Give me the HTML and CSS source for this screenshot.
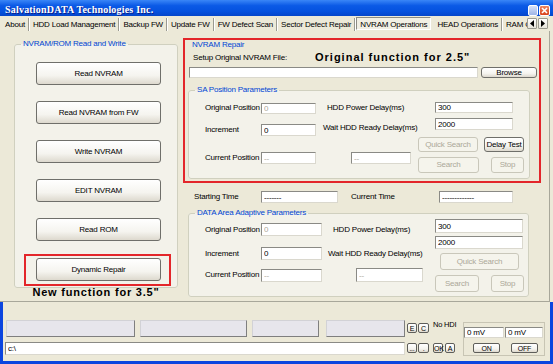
FILE: index.html
```html
<!DOCTYPE html>
<html lang="en">
<head>
    <meta charset="UTF-8">
    <meta name="viewport" content="width=device-width, initial-scale=1.0">
    <title>SalvationDATA Technologies Inc.</title>
    <link rel="stylesheet" href="styles.css">
</head>
<body>

<div class="window">

    <!-- title bar -->
    <div class="titlebar">
        <span class="title">SalvationDATA Technologies Inc.</span>
        <div class="title-buttons">
            <span class="tb tb-min"></span>
            <span class="tb tb-close">
                <svg width="11" height="11" viewBox="0 0 11 11"><path d="M3 3 L8 8 M8 3 L3 8" stroke="#fff" stroke-width="1.6"/></svg>
            </span>
        </div>
    </div>

    <!-- tab strip -->
    <div class="tabs">
        <div class="tab-strip">
            <span class="tab">About</span>
            <span class="tab">HDD Load Management</span>
            <span class="tab">Backup FW</span>
            <span class="tab">Update FW</span>
            <span class="tab">FW Defect Scan</span>
            <span class="tab">Sector Defect Repair</span>
            <span class="tab selected">NVRAM Operations</span>
            <span class="tab">HEAD Operations</span>
            <span class="tab">RAM Check</span>
        </div>
        <div class="tab-arrows">
            <span class="arrow"><svg width="4" height="7" viewBox="0 0 4 7"><polygon points="4,0 4,7 0,3.5" fill="#000"/></svg></span>
            <span class="arrow"><svg width="4" height="7" viewBox="0 0 4 7"><polygon points="0,0 0,7 4,3.5" fill="#000"/></svg></span>
        </div>
    </div>

    <!-- NVRAM Operations page -->
    <div class="page">
        <div class="col-left">
            <fieldset class="group group-rw">
                <legend>NVRAM/ROM Read and Write</legend>
                <div class="btn-stack">
                    <button class="btn btn-big">Read NVRAM</button>
                    <button class="btn btn-big">Read NVRAM from FW</button>
                    <button class="btn btn-big">Write NVRAM</button>
                    <button class="btn btn-big">EDIT NVRAM</button>
                    <button class="btn btn-big">Read ROM</button>
                    <div class="mark mark-new">
                        <button class="btn btn-big">Dynamic Repair</button>
                    </div>
                </div>
            </fieldset>
            <p class="note note-new">New function for 3.5"</p>
        </div>

        <div class="col-right">
            <div class="mark mark-repair">
                <div class="sub-title">NVRAM Repair</div>
                <div class="file-head">
                    <span class="file-label">Setup Original NVRAM File:</span>
                    <span class="note">Original function for 2.5"</span>
                </div>
                <div class="file-row">
                    <input class="field file-field" type="text" value="">
                    <button class="btn browse-btn">Browse</button>
                </div>

                <fieldset class="group sa">
                    <legend>SA Position Parameters</legend>
                    <div class="param-body">
                        <div class="param-left">
                            <div class="prow">
                                <span class="plabel">Original Position</span>
                                <input class="field fpos" type="text" value="0" disabled>
                                <span class="mlabel">HDD Power Delay(ms)</span>
                            </div>
                            <div class="prow">
                                <span class="plabel">Increment</span>
                                <input class="field fpos" type="text" value="0">
                                <span class="mlabel">Wait HDD Ready Delay(ms)</span>
                            </div>
                            <div class="prow">
                                <span class="plabel">Current Position</span>
                                <input class="field fpos" type="text" value="--" disabled>
                                <input class="field fcur" type="text" value="--" disabled>
                            </div>
                        </div>
                        <div class="param-right">
                            <input class="field fdelay" type="text" value="300">
                            <input class="field fdelay" type="text" value="2000">
                            <div class="brow">
                                <button class="btn b-quick" disabled>Quick Search</button>
                                <button class="btn b-test">Delay Test</button>
                            </div>
                            <div class="brow">
                                <button class="btn b-search" disabled>Search</button>
                                <button class="btn b-stop" disabled>Stop</button>
                            </div>
                        </div>
                    </div>
                </fieldset>
            </div>

            <div class="time-row">
                <span class="t-start">Starting Time</span>
                <input class="field f-start" type="text" value="-------">
                <span class="t-cur">Current Time</span>
                <input class="field f-cur" type="text" value="-------------">
            </div>

            <fieldset class="group da">
                <legend>DATA Area Adaptive Parameters</legend>
                <div class="param-body">
                    <div class="param-left">
                        <div class="prow">
                            <span class="plabel">Original Position</span>
                            <input class="field fpos" type="text" value="0" disabled>
                            <span class="mlabel">HDD Power Delay(ms)</span>
                        </div>
                        <div class="prow">
                            <span class="plabel">Increment</span>
                            <input class="field fpos" type="text" value="0">
                            <span class="mlabel">Wait HDD Ready Delay(ms)</span>
                        </div>
                        <div class="prow">
                            <span class="plabel">Current Position</span>
                            <input class="field fpos" type="text" value="--" disabled>
                            <input class="field fcur" type="text" value="--" disabled>
                        </div>
                    </div>
                    <div class="param-right">
                        <input class="field fdelay" type="text" value="300">
                        <input class="field fdelay" type="text" value="2000">
                        <button class="btn b-quick" disabled>Quick Search</button>
                        <div class="brow">
                            <button class="btn b-search" disabled>Search</button>
                            <button class="btn b-stop" disabled>Stop</button>
                        </div>
                    </div>
                </div>
            </fieldset>
        </div>
    </div>

    <!-- status area -->
    <div class="status">
        <div class="status-left">
            <div class="srow">
                <span class="panel p1"></span>
                <span class="panel p2"></span>
                <span class="panel p3"></span>
                <span class="panel p4"></span>
                <button class="btn mini m-e">E</button>
                <button class="btn mini m-c">C</button>
                <span class="hdi">No HDI</span>
            </div>
            <div class="srow srow-2">
                <input class="field path-field" type="text" value="c:\">
                <button class="btn mini m-dots">...</button>
                <button class="btn mini m-dot">.</button>
                <button class="btn mini m-ok">OK</button>
                <button class="btn mini m-a">A</button>
            </div>
        </div>
        <div class="mv-box">
            <div class="mv-row">
                <input class="field mv1" type="text" value="0 mV">
                <input class="field mv2" type="text" value="0 mV">
            </div>
            <div class="mv-btns">
                <button class="btn mini m-on">ON</button>
                <button class="btn mini m-off">OFF</button>
            </div>
        </div>
    </div>

</div>

</body>
</html>
```

FILE: styles.css
```css
* {
    box-sizing: border-box;
}

body {
    margin: 0;
    width: 553px;
    height: 364px;
    overflow: hidden;
    background-color: #ECE9D8;
    font-family: "Liberation Sans", Arial, sans-serif;
    font-size: 8px;
    letter-spacing: -0.2px;
    line-height: 10px;
    color: #000;
}

.window {
    width: 553px;
    height: 364px;
    display: flex;
    flex-direction: column;
}

/* title bar */
.titlebar {
    height: 16px;
    flex: none;
    display: flex;
    align-items: flex-start;
    overflow: hidden;
    background: linear-gradient(#3A86F7, #0B5AE6 35%, #0552DF 70%, #0446CA);
}

.title {
    margin: 5px 0 0 5px;
    font-family: "Liberation Serif", "Times New Roman", serif;
    font-size: 10px;
    font-weight: bold;
    letter-spacing: 0.2px;
    color: #fff;
    text-shadow: 1px 1px 0 #0A1E8C;
    white-space: nowrap;
}

.title-buttons {
    margin: 5px 3px 0 auto;
    display: flex;
    gap: 1px;
}

.tb {
    width: 11px;
    height: 11px;
    border: 1px solid #fff;
    border-radius: 2px;
    display: block;
}

.tb-min {
    width: 10px;
    background: linear-gradient(#D7E2F8, #9DB4E6);
}

.tb-close {
    background: linear-gradient(#EE8760, #D9421C);
}

.tb-close svg {
    display: block;
    margin: -1px;
}

/* tabs */
.tabs {
    height: 15px;
    flex: none;
    display: flex;
}

.tab-strip {
    width: 527px;
    flex: none;
    display: flex;
    overflow: hidden;
    padding-left: 2px;
}

.tab {
    flex: none;
    height: 13px;
    margin-top: 2px;
    padding: 2px 3px 1px 3px;
    border-right: 1px solid #9A9A90;
    box-shadow: 1px 0 0 #fff;
    white-space: nowrap;
}

.tab + .tab {
    margin-left: 1px;
}

.tab.selected {
    min-width: 74px;
    margin: 1px 2px 0 1px;
    padding: 2px 3px 1px 3px;
    height: 13px;
    text-align: center;
    border: 1px solid;
    border-color: #8C8C84 #fff #fff #8C8C84;
    box-shadow: none;
    background-color: #F1EFE4;
}

.tab-arrows {
    display: flex;
    margin-top: 2px;
    gap: 1px;
}

.arrow {
    width: 10px;
    height: 11px;
    display: flex;
    align-items: center;
    justify-content: center;
    background: linear-gradient(#FFFFFF, #E6E4DA);
    border: 1px solid #9A9A90;
    border-radius: 1px;
}

/* page */
.page {
    height: 271px;
    width: 550px;
    flex: none;
    display: flex;
    border-right: 1px solid #A8A79A;
    border-bottom: 1px solid #A8A79A;
}

.col-left {
    width: 178px;
    flex: none;
    padding-left: 14px;
}

.group {
    margin: 0;
    min-width: 0;
    border: 1px solid #D0D0BF;
    border-radius: 3px;
    background-color: #F3F2EA;
}

.group legend {
    padding: 0 2px;
    line-height: 10px;
    color: #0046D5;
}

.group-rw {
    width: 164px;
    margin-top: 8px;
    padding: 0 0 1px 6px;
}

.btn-stack {
    display: flex;
    flex-direction: column;
    gap: 16px;
    padding: 13px 0 0 15px;
}

.mark {
    border: 2px solid #E3262A;
}

.mark-new {
    width: 147px;
    margin: -3px 0 0 -12px;
    padding: 2px 10px 3px;
}

.note {
    margin: 0;
    font-family: "Liberation Sans", Arial, sans-serif;
    font-size: 11px;
    font-weight: bold;
    line-height: 13px;
    letter-spacing: 1px;
    white-space: nowrap;
}

.note-new {
    margin-top: -2px;
    text-align: center;
    letter-spacing: 0.8px;
}

/* buttons and fields */
.btn {
    font: inherit;
    letter-spacing: inherit;
    color: #000;
    padding: 0;
    border: 1px solid #6F6F6A;
    border-radius: 3px;
    background: linear-gradient(#FFFFFF, #F5F4EF 60%, #DDD9CE);
    white-space: nowrap;
}

.btn:disabled {
    color: #ACA899;
    border-color: #C9C7BA;
    background: #F5F4EC;
}

.btn-big {
    width: 125px;
    height: 23px;
}

.field {
    font: inherit;
    letter-spacing: inherit;
    line-height: 9px;
    padding: 0 2px;
    color: #000;
    background-color: #fff;
    border: 1px solid;
    border-color: #8A8A85 #DAD8CE #DAD8CE #8A8A85;
    border-radius: 0;
}

.field:disabled {
    color: #ACA899;
    background-color: #fff;
}

/* right column */
.col-right {
    margin-left: 5px;
    padding-top: 7px;
}

.mark-repair {
    width: 358px;
    padding: 0 2px 2px 4px;
}

.sub-title {
    margin-left: 3px;
    line-height: 10px;
    color: #0046D5;
}

.file-head {
    display: flex;
    align-items: center;
    height: 15px;
}

.file-label {
    width: 122px;
    margin-left: 4px;
    white-space: nowrap;
}

.file-row {
    display: flex;
    gap: 3px;
    height: 11px;
    margin-top: 2px;
}

.file-field {
    width: 289px;
    height: 11px;
}

.browse-btn {
    width: 56px;
    height: 11px;
    line-height: 8px;
}

.param-body {
    display: flex;
    padding-left: 10px;
}

.param-left {
    flex: none;
}

.prow {
    display: flex;
    align-items: center;
}

.plabel {
    width: 56px;
    flex: none;
    white-space: nowrap;
}

.mlabel {
    white-space: nowrap;
}

.param-right {
    display: flex;
    flex-direction: column;
    align-items: flex-start;
}

.brow {
    display: flex;
}

/* SA position group */
.sa {
    width: 342px;
    margin: 7px 0 0 -1px;
    padding: 0 0 5px 6px;
}

.sa .param-body {
    padding-top: 7px;
}

.sa .param-left {
    width: 206px;
}

.sa .prow {
    height: 12px;
}

.sa .prow:nth-child(2) {
    margin-top: 10px;
}

.sa .prow:nth-child(3) {
    margin-top: 16px;
}

.sa .fpos {
    width: 55px;
    height: 12px;
}

.sa .prow:first-child .fpos {
    height: 11px;
}

.sa .prow:first-child .mlabel {
    margin-left: 11px;
}

.sa .prow:nth-child(2) .mlabel {
    margin-left: 7px;
    margin-top: -5px;
}

.sa .fcur {
    width: 60px;
    height: 12px;
    margin-left: 35px;
}

.sa .param-right {
    margin-left: 7px;
    width: 106px;
}

.sa .fdelay {
    width: 78px;
    height: 11px;
    margin-left: 17px;
}

.sa .fdelay + .fdelay {
    height: 12px;
    margin-top: 5px;
}

.sa .brow {
    margin-top: 7px;
    height: 15px;
}

.sa .brow + .brow {
    margin-top: 5px;
    height: 16px;
}

.sa .b-quick {
    width: 60px;
}

.sa .b-test {
    width: 40px;
    margin-left: 6px;
}

.sa .b-search {
    width: 61px;
}

.b-stop {
    width: 33px;
    margin-left: 12px;
}

/* times */
.time-row {
    display: flex;
    align-items: center;
    height: 12px;
    margin-top: 8px;
}

.t-start {
    width: 67px;
    margin-left: 11px;
}

.f-start {
    width: 77px;
    height: 12px;
}

.t-cur {
    width: 88px;
    margin-left: 13px;
}

.f-cur {
    width: 74px;
    height: 12px;
}

/* DATA area group */
.da {
    width: 341px;
    margin: 5px 0 0 5px;
    padding: 0 0 4px 6px;
}

.da .param-body {
    padding-top: 1px;
}

.da .param-left {
    width: 218px;
    padding-top: 4px;
}

.da .prow {
    height: 13px;
}

.da .prow:nth-child(2) {
    margin-top: 11px;
}

.da .prow:nth-child(3) {
    margin-top: 8px;
    height: 14px;
}

.da .fpos {
    width: 61px;
    height: 13px;
}

.da .prow:first-child .mlabel {
    margin-left: 11px;
}

.da .prow:nth-child(2) .mlabel {
    margin-left: 6px;
}

.da .fcur {
    width: 67px;
    height: 14px;
    margin-left: 34px;
}

.da .param-right {
    margin-left: 12px;
    width: 89px;
}

.da .fdelay {
    width: 88px;
    height: 14px;
}

.da .fdelay + .fdelay {
    height: 13px;
    margin-top: 3px;
}

.da .b-quick {
    width: 79px;
    height: 17px;
    margin: 4px 0 0 5px;
}

.da .brow {
    margin-top: 5px;
    height: 17px;
}

.da .b-search {
    width: 44px;
}

/* status area */
.status {
    height: 62px;
    flex: none;
    display: flex;
    padding-top: 18px;
    border-left: 3px solid #0B45DF;
    border-right: 3px solid #0B45DF;
    border-bottom: 3px solid #0B45DF;
}

.status-left {
    width: 454px;
    margin-left: 2px;
}

.srow {
    display: flex;
    align-items: flex-start;
    height: 17px;
    padding-left: 1px;
}

.srow-2 {
    height: 13px;
    margin-top: 5px;
    padding-left: 0;
}

.panel {
    height: 17px;
    background-color: #E7E6EC;
    border: 1px solid;
    border-color: #D2D2D6 #7F7F7F #7F7F7F #D2D2D6;
}

.p1 { width: 129px; }
.p2 { width: 107px; margin-left: 5px; }
.p3 { width: 67px; margin-left: 5px; }
.p4 { width: 79px; margin-left: 7px; }

.mini {
    height: 10px;
    font-size: 7px;
    line-height: 7px;
    border-radius: 2px;
    border-color: #5E5E5A;
}

.m-e { width: 10px; margin: 3px 0 0 2px; }
.m-c { width: 11px; margin: 3px 0 0 1px; }

.hdi {
    margin-left: 4px;
    font-size: 7.5px;
    white-space: nowrap;
}

.path-field {
    width: 400px;
    height: 13px;
}

.m-dots { width: 10px; margin: 1px 0 0 2px; }
.m-dot { width: 11px; margin: 1px 0 0 1px; }
.m-ok { width: 10px; margin: 1px 0 0 4px; }
.m-a { width: 10px; margin: 1px 0 0 2px; }

.mv-box {
    width: 82px;
    height: 34px;
    margin: 2px 0 0 4px;
    padding-top: 4px;
    border: 1px solid #C8C5B4;
}

.mv-row {
    display: flex;
}

.mv1 {
    width: 40px;
    height: 11px;
}

.mv2 {
    width: 38px;
    height: 11px;
    margin-left: 1px;
}

.mv-btns {
    display: flex;
    margin-top: 5px;
}

.m-on { width: 27px; margin-left: 9px; }
.m-off { width: 27px; margin-left: 11px; }
```
